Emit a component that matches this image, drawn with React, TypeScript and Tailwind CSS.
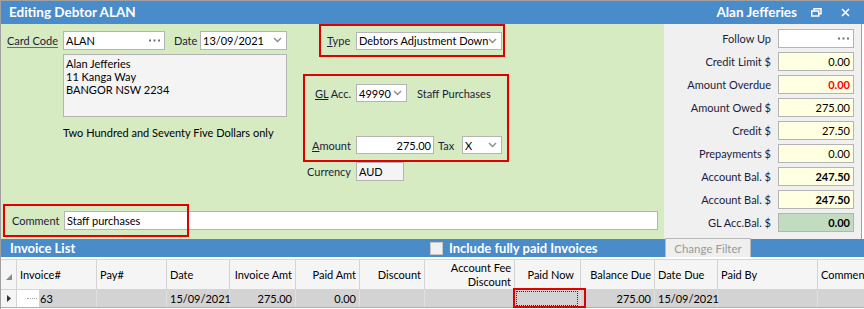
import React from "react";

const Chevron = () => (
  <svg width="9" height="6" viewBox="0 0 9 6" className="shrink-0">
    <polyline points="1,1 4.5,4.5 8,1" fill="none" stroke="#8c8c8c" strokeWidth="1.4" />
  </svg>
);

const Dots = () => (
  <svg width="11" height="3" viewBox="0 0 11 3" className="shrink-0">
    <rect x="0" y="0.5" width="2" height="2" fill="#707070" />
    <rect x="4.5" y="0.5" width="2" height="2" fill="#707070" />
    <rect x="9" y="0.5" width="2" height="2" fill="#707070" />
  </svg>
);

function RightField({
  label,
  value,
  box,
  val,
}: {
  label: string;
  value: string;
  box: string;
  val: string;
}) {
  return (
    <div className="flex items-center h-[19px]">
      <div className="flex-1 text-right pr-[7px] text-[#1c1c3c] whitespace-nowrap">{label}</div>
      <div className={box}>
        <span className={val}>{value}</span>
      </div>
    </div>
  );
}

export default function App() {
  const yellowBox =
    "w-[76px] h-[19px] border border-[#b4b4b4] bg-[#ffffe1] flex items-center justify-end pr-[3px]";
  return (
    <div className="w-[864px] h-[309px] overflow-hidden whitespace-nowrap bg-white border-l border-t border-[#a0a0a0] font-['Lato',sans-serif] text-[11px] leading-[13px] text-[#1c1c3c]">
      {/* Title bar */}
      <div className="h-[23px] bg-[#4a8bca] flex items-center justify-between pl-[8px] pr-[14px] text-white font-bold text-[13.5px]">
        <span>Editing Debtor ALAN</span>
        <div className="flex items-center">
          <span>Alan Jefferies</span>
          <svg width="11" height="9" viewBox="0 0 11 9" className="ml-[14px]">
            <rect x="3" y="0.75" width="7" height="5" fill="none" stroke="white" strokeWidth="1.5" />
            <rect x="0.75" y="3" width="7" height="5" fill="#4a8bca" stroke="white" strokeWidth="1.5" />
          </svg>
          <svg width="9" height="9" viewBox="0 0 9 9" className="ml-[19px]">
            <path d="M1 1 L8 8 M8 1 L1 8" stroke="white" strokeWidth="1.6" />
          </svg>
        </div>
      </div>

      {/* Main area */}
      <div className="flex h-[215px]">
        {/* Green panel */}
        <div className="w-[663px] bg-[#d6ebc1] flex flex-col">
          <div className="flex h-[180px]">
            {/* Left column */}
            <div className="w-[302px] pl-[6px] pt-[7px]">
              <div className="flex items-center h-[18px]">
                <span className="w-[56px]">
                  <span className="underline underline-offset-2 decoration-[#6b6b6b]">Card Code</span>
                </span>
                <div className="w-[102px] h-[19px] border border-[#b4b4b4] bg-white flex items-center justify-between pl-[2px] pr-[4px] text-black">
                  <span>ALAN</span>
                  <Dots />
                </div>
                <span className="ml-[9px] w-[26px]">Date</span>
                <div className="w-[87px] h-[19px] border border-[#b4b4b4] bg-white flex items-center justify-between pl-[2px] pr-[4px] text-black">
                  <span>13/09/2021</span>
                  <Chevron />
                </div>
              </div>
              <div className="ml-[56px] mt-[5px] w-[224px] h-[63px] border border-[#b4b4b4] bg-[#f4f4f4] pl-[2px] pt-[2px] text-black">
                <div>Alan Jefferies</div>
                <div>11 Kanga Way</div>
                <div>BANGOR NSW 2234</div>
              </div>
              <div className="ml-[56px] mt-[9px] text-black">Two Hundred and Seventy Five Dollars only</div>
            </div>

            {/* Middle column */}
            <div className="flex flex-col">
              <div className="ml-[16px] w-[186px] h-[33px] border-2 border-[#e00000] flex items-center pl-[6px] pr-[1px]">
                <span className="w-[29px]">
                  <span className="underline">T</span>ype
                </span>
                <div className="w-[146px] h-[18px] border border-[#b4b4b4] bg-white flex items-center justify-between pl-[2px] pr-[4px] text-black">
                  <span>Debtors Adjustment Down</span>
                  <Chevron />
                </div>
              </div>
              <div className="mt-[17px] w-[206px] h-[88px] border-2 border-[#e00000] flex flex-col justify-between pt-[8px] pb-[6px]">
                <div className="flex items-center h-[18px] pl-[10px]">
                  <span className="w-[41px]">
                    <span className="underline">GL</span> Acc.
                  </span>
                  <div className="w-[51px] h-[18px] border border-[#b4b4b4] bg-white flex items-center justify-between pl-[2px] pr-[4px] text-black">
                    <span>49990</span>
                    <Chevron />
                  </div>
                  <span className="ml-[10px]">Staff Purchases</span>
                </div>
                <div className="flex items-center h-[18px] pl-[7px]">
                  <span className="w-[44px]">
                    <span className="underline">A</span>mount
                  </span>
                  <div className="w-[78px] h-[18px] border border-[#b4b4b4] bg-white flex items-center justify-end pr-[2px] text-black">
                    <span>275.00</span>
                  </div>
                  <span className="ml-[4px] w-[24px]">Tax</span>
                  <div className="w-[40px] h-[18px] border border-[#b4b4b4] bg-white flex items-center justify-between pl-[2px] pr-[4px] text-black">
                    <span>X</span>
                    <Chevron />
                  </div>
                </div>
              </div>
              <div className="flex items-center h-[19px] pl-[4px]">
                <span className="w-[49px]">Currency</span>
                <div className="w-[48px] h-[19px] border border-[#b4b4b4] bg-[#f4f4f4] flex items-center pl-[2px] text-black">
                  AUD
                </div>
              </div>
            </div>
          </div>

          {/* Comment row */}
          <div className="relative h-[33px] flex items-center pl-[11px]">
            <span className="w-[52px]">Comment</span>
            <div className="w-[594px] h-[19px] border border-[#b4b4b4] bg-white flex items-center pl-[2px] text-black">
              Staff purchases
            </div>
            <div className="absolute left-[2px] top-0 w-[186px] h-[33px] border-2 border-[#e00000]" />
          </div>
        </div>

        {/* Right panel */}
        <div className="w-[198px] bg-[#f0f0f0] border-r border-[#a0a0a0] pt-[5px] pr-[7px] flex flex-col gap-[4px]">
          <div className="flex items-center h-[19px]">
            <div className="flex-1 text-right pr-[7px]">Follow Up</div>
            <div className="w-[76px] h-[19px] border border-[#b4b4b4] bg-white flex items-center justify-end pr-[4px]">
              <Dots />
            </div>
          </div>
          <RightField label="Credit Limit $" value="0.00" box={yellowBox} val="text-black" />
          <RightField label="Amount Overdue" value="0.00" box={yellowBox} val="text-[#ff0000] font-bold" />
          <RightField label="Amount Owed $" value="275.00" box={yellowBox} val="text-black" />
          <RightField label="Credit $" value="27.50" box={yellowBox} val="text-black" />
          <RightField label="Prepayments $" value="0.00" box={yellowBox} val="text-black" />
          <RightField label="Account Bal. $" value="247.50" box={yellowBox} val="text-black font-bold" />
          <RightField label="Account Bal. $" value="247.50" box={yellowBox} val="text-black font-bold" />
          <RightField
            label="GL Acc.Bal. $"
            value="0.00"
            box="w-[76px] h-[19px] border border-[#b4b4b4] bg-[#c2dcc2] flex items-center justify-end pr-[3px]"
            val="text-black font-bold"
          />
        </div>
      </div>

      {/* Invoice list bar */}
      <div className="h-[18px] bg-[#4a8bca] flex items-center text-white font-bold text-[13px]">
        <span className="pl-[9px] w-[429px]">Invoice List</span>
        <div className="w-[13px] h-[13px] bg-[#f0f0f0] border border-[#c8c8c8]" />
        <span className="ml-[6px] w-[216px]">Include fully paid Invoices</span>
        <div className="self-end w-[86px] h-[19px] bg-[#efefef] border border-[#b8b8b8] border-b-0 flex items-center justify-center text-[#9a9a9a] font-normal text-[11.5px]">
          Change Filter
        </div>
      </div>

      {/* Grid */}
      <div className="pt-[2px] bg-white">
        <div className="grid grid-cols-[16px_80px_70px_63px_66px_64px_65px_90px_66px_74px_63px_100px_1fr] h-[31px] bg-[#f5f5f5] border-t border-b border-[#d4d4d4] text-black">
          <div className="border-r border-[#d4d4d4] flex items-end pb-[9px] pl-[5px]">
            <svg width="6" height="6" viewBox="0 0 6 6">
              <polygon points="6,0 6,6 0,6" fill="#8a8a8a" />
            </svg>
          </div>
          <div className="border-r border-[#d4d4d4] flex items-center pl-[3px]">Invoice#</div>
          <div className="border-r border-[#d4d4d4] flex items-center pl-[3px]">Pay#</div>
          <div className="border-r border-[#d4d4d4] flex items-center pl-[3px]">Date</div>
          <div className="border-r border-[#d4d4d4] flex items-center justify-end pr-[3px]">Invoice Amt</div>
          <div className="border-r border-[#d4d4d4] flex items-center justify-end pr-[3px]">Paid Amt</div>
          <div className="border-r border-[#d4d4d4] flex items-center justify-end pr-[3px]">Discount</div>
          <div className="border-r border-[#d4d4d4] flex flex-col justify-center items-end pr-[3px] leading-[14px]">
            <span>Account Fee</span>
            <span>Discount</span>
          </div>
          <div className="border-r border-[#d4d4d4] flex items-center justify-end pr-[6px]">Paid Now</div>
          <div className="border-r border-[#d4d4d4] flex items-center justify-end pr-[3px]">Balance Due</div>
          <div className="border-r border-[#d4d4d4] flex items-center pl-[3px]">Date Due</div>
          <div className="border-r border-[#d4d4d4] flex items-center pl-[3px]">Paid By</div>
          <div className="flex items-center pl-[3px] overflow-hidden">Comment</div>
        </div>
        <div className="grid grid-cols-[16px_80px_70px_63px_66px_64px_65px_90px_66px_74px_63px_100px_1fr] h-[18px] bg-[#d3d3d3] border-b border-[#b0b0b0] text-black">
          <div className="bg-[#f5f5f5] border-r border-[#d4d4d4] flex items-center pl-[6px]">
            <svg width="4" height="7" viewBox="0 0 4 7">
              <polygon points="0,0 4,3.5 0,7" fill="#333" />
            </svg>
          </div>
          <div className="border-r border-[#e0e0e0] flex items-center">
            <div className="w-[22px] h-full bg-white flex items-center justify-end pr-[2px]">
              <div className="w-[10px] border-t border-dotted border-[#a0a0a0]" />
            </div>
            <span className="pl-[1px]">63</span>
          </div>
          <div className="border-r border-[#e0e0e0]" />
          <div className="border-r border-[#e0e0e0] flex items-center pl-[3px]">15/09/2021</div>
          <div className="border-r border-[#e0e0e0] flex items-center justify-end pr-[3px]">275.00</div>
          <div className="border-r border-[#e0e0e0] flex items-center justify-end pr-[3px]">0.00</div>
          <div className="border-r border-[#e0e0e0]" />
          <div className="border-r border-[#e0e0e0]" />
          <div className="relative border-r border-[#e0e0e0]">
            <div className="absolute left-[1px] top-[1px] right-[2px] bottom-[1px] border border-dotted border-[#333]" />
            <div className="absolute left-[-2px] top-[-2px] w-[73px] h-[20px] border-2 border-[#e00000]" />
          </div>
          <div className="border-r border-[#e0e0e0] flex items-center justify-end pr-[3px]">275.00</div>
          <div className="border-r border-[#e0e0e0] flex items-center pl-[3px]">15/09/2021</div>
          <div className="border-r border-[#e0e0e0]" />
          <div />
        </div>
      </div>
    </div>
  );
}
